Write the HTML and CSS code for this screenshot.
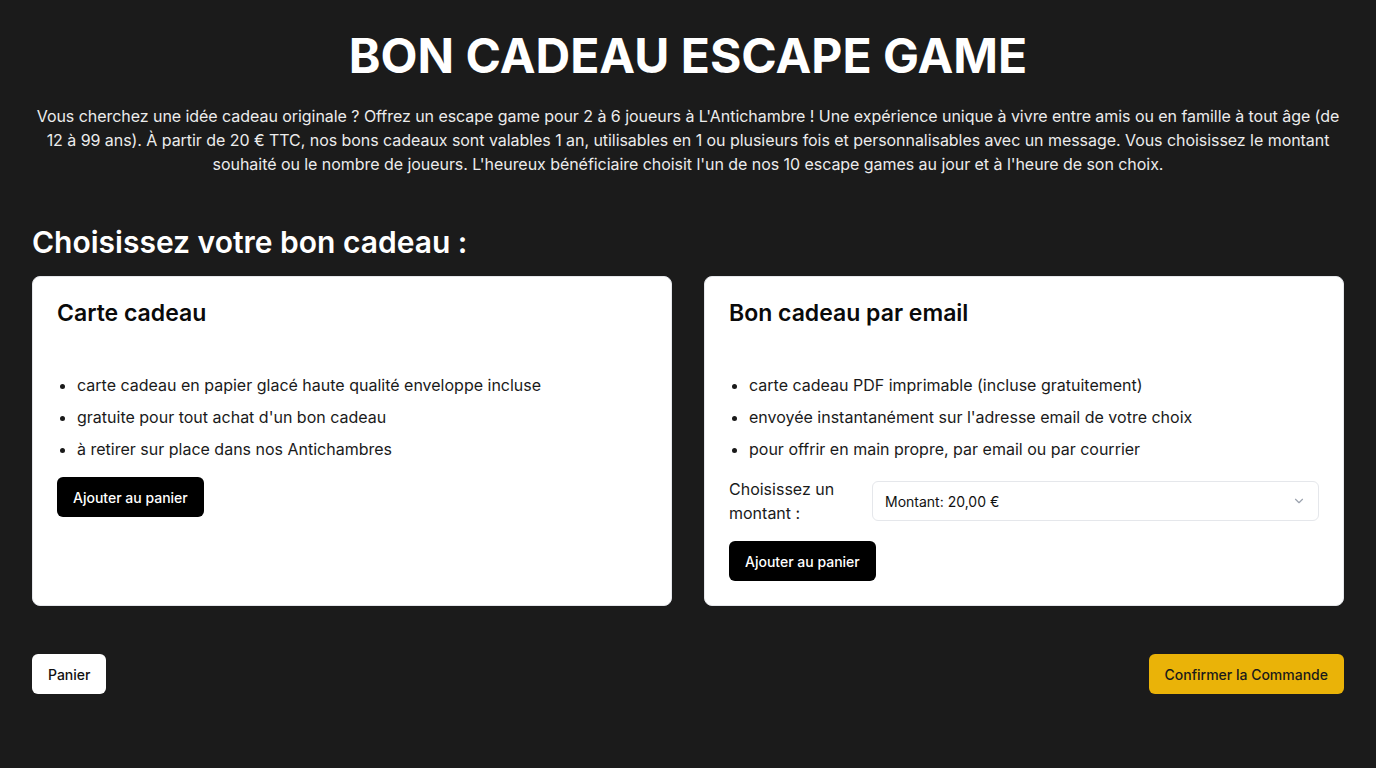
FILE: index.html
```html
<!DOCTYPE html>
<html lang="fr">
<head>
<meta charset="utf-8">
<title>Bon cadeau escape game</title>
<link rel="stylesheet" href="styles.css">
</head>
<body>
<main class="page">
  <h1 class="title">BON CADEAU ESCAPE GAME</h1>
  <p class="intro">Vous cherchez une idée cadeau originale ? Offrez un escape game pour 2 à 6 joueurs à L'Antichambre ! Une expérience unique à vivre entre amis ou en famille à tout âge (de 12 à 99 ans). À partir de 20 € TTC, nos bons cadeaux sont valables 1 an, utilisables en 1 ou plusieurs fois et personnalisables avec un message. Vous choisissez le montant souhaité ou le nombre de joueurs. L'heureux bénéficiaire choisit l'un de nos 10 escape games au jour et à l'heure de son choix.</p>

  <h2 class="section-title">Choisissez votre bon cadeau :</h2>

  <div class="cards">
    <section class="card">
      <h3 class="card-title">Carte cadeau</h3>
      <ul class="features">
        <li>carte cadeau en papier glacé haute qualité enveloppe incluse</li>
        <li>gratuite pour tout achat d'un bon cadeau</li>
        <li>à retirer sur place dans nos Antichambres</li>
      </ul>
      <button class="btn btn-dark">Ajouter au panier</button>
    </section>

    <section class="card">
      <h3 class="card-title">Bon cadeau par email</h3>
      <ul class="features">
        <li>carte cadeau PDF imprimable (incluse gratuitement)</li>
        <li>envoyée instantanément sur l'adresse email de votre choix</li>
        <li>pour offrir en main propre, par email ou par courrier</li>
      </ul>
      <div class="amount-row">
        <label class="amount-label" for="amount">Choisissez un montant :</label>
        <div class="select" id="amount">
          <span>Montant: 20,00 €</span>
          <svg class="chevron" width="14" height="14" viewBox="0 0 24 24" fill="none" stroke="#9ca3af" stroke-width="2" stroke-linecap="round" stroke-linejoin="round"><path d="M6 9l6 6 6-6"/></svg>
        </div>
      </div>
      <button class="btn btn-dark">Ajouter au panier</button>
    </section>
  </div>

  <div class="footer-actions">
    <button class="btn btn-light">Panier</button>
    <button class="btn btn-yellow">Confirmer la Commande</button>
  </div>
</main>
</body>
</html>
```

FILE: styles.css
```css
* { box-sizing: border-box; }

html, body {
  margin: 0;
  padding: 0;
  background: #1b1b1b;
}

body {
  font-family: Inter, "Noto Sans", sans-serif;
  color: #f5f5f5;
}

.page {
  padding: 24px 32px 40px;
}

.title {
  margin: 0;
  text-align: center;
  font-size: 48px;
  line-height: 64px;
  font-weight: 700;
  color: #ffffff;
}

.intro {
  margin: 16px 0 0;
  text-align: center;
  font-size: 16px;
  line-height: 24px;
  color: #ececec;
  letter-spacing: -0.05px;
}

.section-title {
  margin: 48px 0 0;
  font-size: 30px;
  line-height: 36px;
  font-weight: 600;
  color: #ffffff;
}

.cards {
  margin-top: 16px;
  display: grid;
  grid-template-columns: 1fr 1fr;
  gap: 32px;
}

.card {
  background: #ffffff;
  border: 1px solid #e5e7eb;
  border-radius: 8px;
  padding: 24px;
  color: #111111;
}

.card-title {
  margin: 0;
  font-size: 23px;
  line-height: 24px;
  font-weight: 600;
  color: #0a0a0a;
}

.features {
  margin: 48px 0 0;
  padding-left: 20px;
  font-size: 16px;
  line-height: 24px;
  color: #1a1a1a;
}

.features li + li {
  margin-top: 8px;
}

.btn {
  font-family: inherit;
  font-size: 14px;
  font-weight: 500;
  height: 40px;
  padding: 0 16px;
  border-radius: 6px;
  border: none;
  cursor: pointer;
}

.btn-dark {
  margin-top: 16px;
  background: #000000;
  color: #ffffff;
}

.amount-row {
  margin-top: 16px;
  display: flex;
  align-items: center;
  gap: 16px;
}

.amount-label {
  width: 127px;
  flex: none;
  font-size: 16px;
  line-height: 24px;
  color: #1a1a1a;
}

.select {
  flex: 1;
  height: 40px;
  border: 1px solid #e5e7eb;
  border-radius: 6px;
  padding: 0 12px;
  display: flex;
  align-items: center;
  justify-content: space-between;
  font-size: 14px;
  color: #111111;
}

.footer-actions {
  margin-top: 48px;
  display: flex;
  justify-content: space-between;
}

.btn-light {
  background: #ffffff;
  color: #111111;
}

.btn-yellow {
  background: #eab308;
  color: #1a1a1a;
}
```
